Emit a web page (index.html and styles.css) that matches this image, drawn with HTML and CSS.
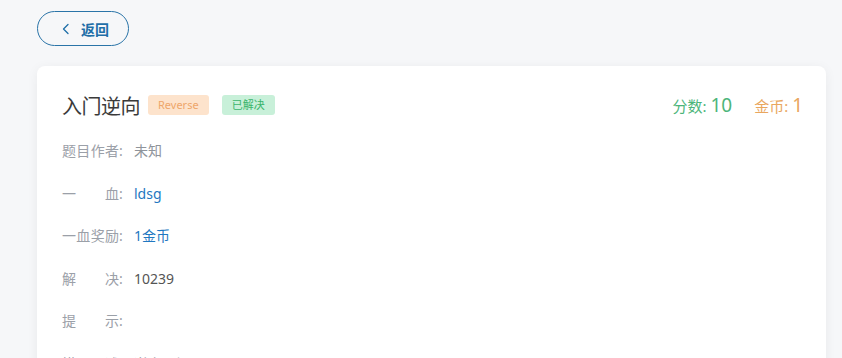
FILE: index.html
```html
<!DOCTYPE html>
<html lang="zh-CN">
<head>
    <meta charset="UTF-8">
    <title>入门逆向</title>
    <link rel="stylesheet" href="styles.css">
</head>
<body>
    <div class="page">
        <a class="back" href="javascript:;">
            <svg width="12" height="12" viewBox="0 0 12 12"><path d="M8 1.5 3.5 6 8 10.5" fill="none" stroke="#1f6fa8" stroke-width="1.3" stroke-linecap="round" stroke-linejoin="round"/></svg>
            <span>返回</span>
        </a>
        <div class="card">
            <div class="head">
                <h1 class="title">入门逆向</h1>
                <span class="tag tag-type">Reverse</span>
                <span class="tag tag-done">已解决</span>
                <div class="score">
                    <span class="point">分数: <b>10</b></span>
                    <span class="coin">金币: <b>1</b></span>
                </div>
            </div>
            <ul class="info">
                <li><span class="label"><i>题目作者</i>:</span><span class="val">未知</span></li>
                <li><span class="label"><i>一血</i>:</span><span class="val link">ldsg</span></li>
                <li><span class="label"><i>一血奖励</i>:</span><span class="val link">1金币</span></li>
                <li><span class="label"><i>解决</i>:</span><span class="val num">10239</span></li>
                <li><span class="label"><i>提示</i>:</span><span class="val"></span></li>
                <li><span class="label"><i>描述</i>:</span><span class="val">逆向入门题目</span></li>
            </ul>
        </div>
    </div>
</body>
</html>
```

FILE: styles.css
```css
*{
    margin: 0;
    padding: 0;
    box-sizing: border-box;
}
body{
    background: #f6f7f9;
    font-family: "Noto Sans", "Noto Sans CJK SC", sans-serif;
    color: #333;
    overflow: hidden;
    height: 358px;
}
.page{
    padding: 11px 16px 0 37px;
}
.back{
    display: flex;
    align-items: center;
    gap: 9px;
    width: 92px;
    height: 35px;
    padding-left: 22px;
    border: 1px solid #2a74a8;
    border-radius: 18px;
    text-decoration: none;
    color: #1f6fa8;
    font-size: 14px;
    font-weight: bold;
}
.card{
    margin-top: 20px;
    background: #fff;
    border-radius: 8px;
    box-shadow: 0 2px 12px rgba(0,0,0,.06);
    padding: 24px 23px 0 25px;
    height: 320px;
    overflow: hidden;
}
.head{
    display: flex;
    align-items: center;
    height: 30px;
}
.title{
    font-size: 20px;
    font-weight: normal;
    color: #3a3a3a;
    margin-right: 8px;
    letter-spacing: -0.5px;
}
.tag{
    display: inline-block;
    height: 20px;
    line-height: 20px;
    padding: 0 10px;
    border-radius: 3px;
    font-size: 11px;
}
.tag-type{
    background: #fde3cc;
    color: #eea66a;
    margin-right: 13px;
}
.tag-done{
    background: #c8f0d9;
    color: #3ab56c;
}
.score{
    margin-left: auto;
    display: flex;
    align-items: baseline;
    gap: 22px;
    font-size: 15px;
}
.score b{
    font-weight: normal;
    font-size: 19px;
}
.point{
    color: #4cb57a;
}
.coin{
    color: #e9a65e;
}
.info{
    list-style: none;
    margin-top: 10px;
}
.info li{
    display: flex;
    height: 42.5px;
    line-height: 42.5px;
    font-size: 14px;
}
.label{
    display: flex;
    width: 72px;
    color: #9ba0a8;
}
.label i{
    font-style: normal;
    width: 57px;
    text-align: justify;
    text-align-last: justify;
}
.val{
    color: #8f949b;
}
.link{
    color: #1f78c1;
}
.num{
    color: #555;
}
```
